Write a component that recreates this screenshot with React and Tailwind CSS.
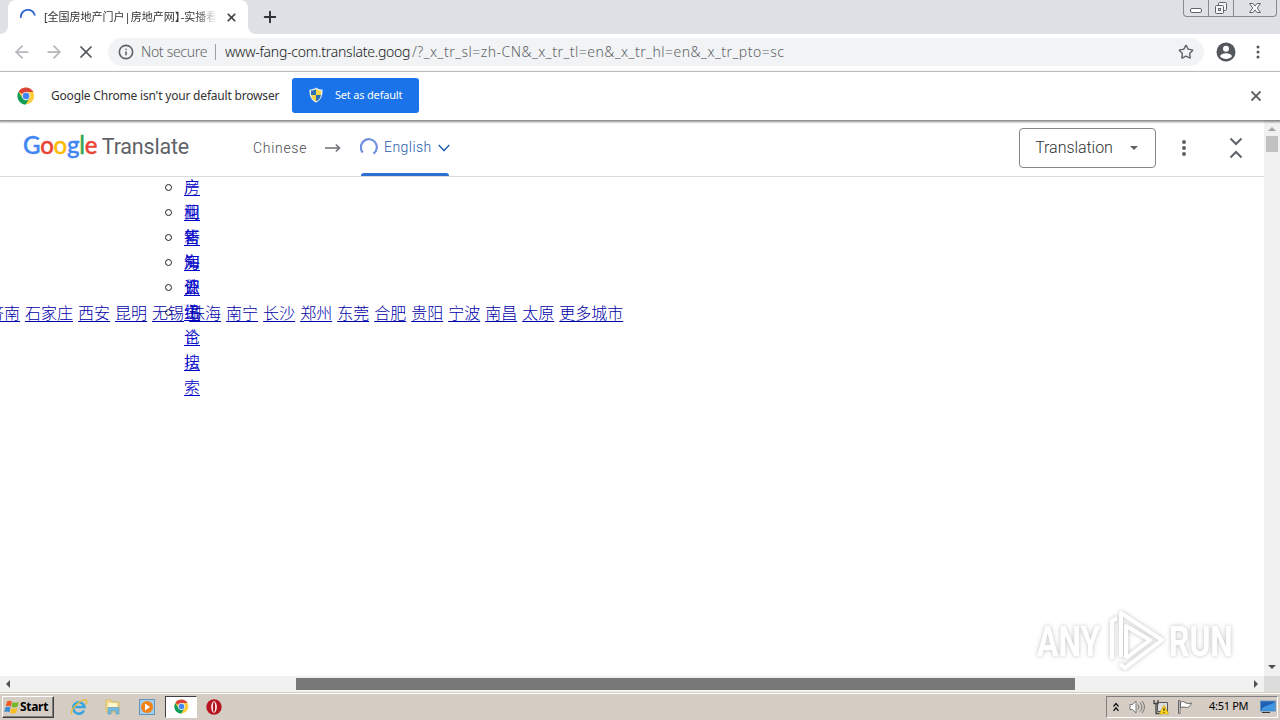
import React from "react";
import { ArrowLeft, ArrowRight, X, Plus, Star, Info } from "lucide-react";

const cities = [
  "济南", "石家庄", "西安", "昆明", "无锡", "珠海", "南宁", "长沙", "郑州",
  "东莞", "合肥", "贵阳", "宁波", "南昌", "太原", "更多城市",
];

const searchTypes = ["新房租售", "产业", "问答知识", "新房资讯", "海外", "业主论坛", "综合搜索"];

const ChromeLogo = ({ className }) => (
  <svg viewBox="0 0 48 48" className={className}>
    <circle cx="24" cy="24" r="22" fill="#ffcd40" />
    <path d="M24 24 4.100 12.500A23 23 0 0 1 43.900 13H24z" fill="#db4437" />
    <path d="M4.100 12.500 14.500 29.500 24 35l9.500-5.500L22.500 47A23 23 0 0 1 4.100 12.500z" fill="#0f9d58" />
    <circle cx="24" cy="24" r="11" fill="#f1f1f1" />
    <circle cx="24" cy="24" r="8.700" fill="#4285f4" />
  </svg>
);

const Shield = () => (
  <svg viewBox="0 0 16 16" className="w-4 h-4">
    <path d="M8 .5C6 2 4 2.5 1.5 2.5 1 9 3.500 13.500 8 15.500 12.500 13.500 15 9 14.500 2.500 12 2.500 10 2 8 .5z" fill="#e8edf2" />
    <path d="M8 2C6.500 3 5 3.500 3 3.600V8H8z" fill="#2d6fb5" />
    <path d="M8 2C9.500 3 11 3.500 13 3.600V8H8z" fill="#f8d648" />
    <path d="M3 8C3.500 11 5 13 8 14.300V8z" fill="#f8d648" />
    <path d="M13 8C12.500 11 11 13 8 14.300V8z" fill="#2d6fb5" />
  </svg>
);

const TabStrip = () => (
  <div className="h-[34px] shrink-0 bg-[#dee1e6] flex items-start justify-between">
    <div className="flex h-full">
      <div className="w-2 h-full bg-white">
        <div className="w-2 h-full bg-[#dee1e6] rounded-br-lg" />
      </div>
      <div className="w-[240px] h-full bg-white rounded-t-lg flex items-center pl-3 pr-2.5">
        <svg viewBox="0 0 16 16" className="w-4 h-4 shrink-0">
          <path d="M.9 8.800A7.100 7.100 0 0 1 14.900 6.500" fill="none" stroke="#3367d6" strokeWidth="1.900" />
        </svg>
        <div className="ml-2 w-[174px] h-5 overflow-hidden whitespace-nowrap text-[11px] leading-5 text-[#333] [mask-image:linear-gradient(to_right,black_87%,transparent)]">
          [全国房地产门户|房地产网<span className="-mr-[5px]">】</span>-实播看房
        </div>
        <X className="w-[13px] h-[13px] ml-2 shrink-0 text-[#3c4043]" strokeWidth={3.200} />
      </div>
      <div className="w-2 h-full bg-white">
        <div className="w-2 h-full bg-[#dee1e6] rounded-bl-lg" />
      </div>
      <Plus className="w-[18px] h-[18px] ml-[5px] mt-2 text-[#303336]" strokeWidth={2.600} />
    </div>
    <div className="flex w-[94px] h-[17px] mr-[3px] border border-t-0 border-[#858991] rounded-b-[4px] text-[#5f646c]">
      <div className="w-[25px] border-r border-[#858991] flex justify-center">
        <div className="mt-2 w-3 h-[5px] border border-[#5f646c] rounded-[2px] bg-white" />
      </div>
      <div className="w-[25px] border-r border-[#858991] flex justify-center">
        <svg viewBox="0 0 14 14" className="w-3.5 h-3.5 mt-px" fill="#f4f5f7" stroke="#5f646c">
          <rect x="4.500" y="1.500" width="8" height="8" rx="1" />
          <rect x="1.500" y="4.500" width="8" height="8" rx="1" />
          <rect x="4.500" y="7.500" width="2" height="2" />
        </svg>
      </div>
      <div className="flex-1 flex justify-center">
        <svg viewBox="0 0 14 12" className="w-3.5 h-3 mt-[2px]" fill="#f7f7f9" stroke="#5f646c">
          <path d="M1.500 1.500h3.500l2 2.500 2-2.500h3.500L9.300 6l3.200 4.500H9L7 8l-2 2.500H1.500L4.700 6z" />
        </svg>
      </div>
    </div>
  </div>
);

const Toolbar = () => (
  <div className="h-[38px] shrink-0 bg-white border-b border-[#dadce0] flex items-center">
    <ArrowLeft className="w-5 h-5 ml-3 -mt-px text-[#b5b7ba]" strokeWidth={2.100} />
    <ArrowRight className="w-5 h-5 ml-3 -mt-px text-[#b5b7ba]" strokeWidth={2.100} />
    <X className="w-5 h-5 ml-3 -mt-px text-[#4f5357]" strokeWidth={2.100} />
    <div className="ml-3 -mt-px w-[1096px] h-7 rounded-full bg-[#f1f3f4] flex items-center pl-2.5 pr-2.5 text-sm whitespace-nowrap">
      <Info className="w-4 h-4 text-[#5f6368] shrink-0" strokeWidth={2.400} />
      <span className="ml-[7px] w-[67px] text-[#5f6368] font-light tracking-[-0.3px]">Not secure</span>
      <span className="ml-[7px] w-px h-4 bg-[#9aa0a6]" />
      <span className="ml-[9px] flex text-[#5f6368] font-light">
        <span className="w-[187px] text-[#202124] tracking-[-0.24px]">www-fang-com.translate.goog</span>
        <span className="tracking-[0.48px]">/?_x_tr_sl=zh-CN&_x_tr_tl=en&_x_tr_hl=en&_x_tr_pto=sc</span>
      </span>
      <Star className="w-4 h-4 ml-auto text-[#5f6368]" strokeWidth={2.100} />
    </div>
    <svg viewBox="0 0 20 20" className="w-5 h-5 ml-3 -mt-px">
      <circle cx="10" cy="10" r="9.500" fill="#54585d" />
      <circle cx="10" cy="6.800" r="3" fill="#fff" />
      <path d="M4 14.300c1.200-4 10.800-4 12 0-3 3.600-9 3.600-12 0z" fill="#fff" />
    </svg>
    <svg viewBox="0 0 4 16" className="w-1 h-4 ml-5 -mt-px" fill="#54585d">
      <circle cx="2" cy="3" r="1.500" />
      <circle cx="2" cy="8" r="1.500" />
      <circle cx="2" cy="13" r="1.500" />
    </svg>
  </div>
);

const DefaultBrowserBar = () => (
  <div className="relative z-20 h-[48px] shrink-0 bg-white flex items-center shadow-[0_1px_2px_1px_rgba(0,0,0,0.45)]">
    <ChromeLogo className="w-[18px] h-[18px] ml-[17px]" />
    <span className="ml-4 w-[229px] text-[12px] text-[#333] tracking-[-0.19px] whitespace-nowrap">
      Google Chrome isn't your default browser
    </span>
    <button className="ml-3 -mt-0.5 w-[127px] h-[35px] bg-[#1a73e8] rounded-[3px] flex items-center pl-4 text-white text-[11px] whitespace-nowrap">
      <Shield />
      <span className="ml-[11px] tracking-[-0.19px]">Set as default</span>
    </button>
    <X className="w-4 h-4 ml-auto mr-4 text-[#5f6368]" strokeWidth={2.700} />
  </div>
);

const TranslateHeader = () => (
  <div className="relative z-10 h-[57px] bg-white border-b border-[#dadce0] flex items-center font-['Roboto',sans-serif] text-[#5f6368]">
    <div className="ml-[23px] w-[166px] flex items-baseline text-[21.5px] leading-7 -mt-1 whitespace-nowrap">
      <span className="w-[79px] text-[24px] font-['Lato',sans-serif] font-medium tracking-[-0.25px] [-webkit-text-stroke:0.4px_currentColor]">
        <span className="text-[#4285f4]">G</span>
        <span className="text-[#ea4335]">o</span>
        <span className="text-[#fbbc04]">o</span>
        <span className="text-[#4285f4]">g</span>
        <span className="text-[#34a853]">l</span>
        <span className="text-[#ea4335]">e</span>
      </span>
      <span className="tracking-[-0.2px]">Translate</span>
    </div>
    <span className="ml-16 w-[54px] text-[14px] font-light text-[#4a4d51] tracking-[0.7px]">Chinese</span>
    <svg viewBox="0 0 16 10" className="w-4 h-2.5 ml-[18px]" fill="none" stroke="#6b6f73" strokeWidth="1.500">
      <path d="M0 5h14.500M10.800 1.500 14.500 5 10.800 8.500" />
    </svg>
    <div className="ml-5 w-[88px] h-full flex flex-col">
      <div className="flex-1 flex items-center text-[#2259ab] text-[14px]">
        <svg viewBox="0 0 18 18" className="w-[18px] h-[18px] shrink-0 -ml-px">
          <path d="M2.800 14.500A8 8 0 1 1 13.500 15.700" fill="none" stroke="#6f8fe0" strokeWidth="2.200" />
        </svg>
        <span className="ml-1.5 w-[47px] mt-px font-light tracking-[0.45px]">English</span>
        <svg viewBox="0 0 12 8" className="w-3 h-2 ml-[7px] mt-0.5 shrink-0" fill="none" stroke="#3068b5" strokeWidth="1.600">
          <path d="M.7 1 6 6.500 11.300 1" />
        </svg>
      </div>
      <div className="h-[3px] bg-[#2b6fd0] rounded-t-[3px]" />
    </div>
    <button className="ml-auto w-[137px] h-10 -mt-px border border-[#80868b] rounded-[4px] flex items-center pl-[15px] pt-px text-[16px] text-[#2f3235] font-light">
      <span className="w-[78px] tracking-[-0.05px]">Translation</span>
      <svg viewBox="0 0 8 4" className="w-2 h-1 ml-[17px]" fill="#5f6368">
        <path d="M0 0h8L4 4z" />
      </svg>
    </button>
    <svg viewBox="0 0 4 16" className="w-1 h-4 ml-[26px] shrink-0" fill="#5f6368">
      <circle cx="2" cy="2" r="2" />
      <circle cx="2" cy="8" r="2" />
      <circle cx="2" cy="14" r="2" />
    </svg>
    <svg viewBox="0 0 14 22" className="w-3.5 h-[22px] ml-[43px] mr-[21px] shrink-0" fill="none" stroke="#5f6368" strokeWidth="2">
      <path d="M1.500 1.500 7 7l5.500-5.500M1.500 20.500 7 15l5.500 5.500" />
    </svg>
  </div>
);

const Watermark = () => (
  <div className="absolute right-[31px] bottom-[3px] h-16 flex items-center text-white font-['Roboto',sans-serif] font-bold text-[43px] [filter:drop-shadow(0_0_2px_rgba(0,0,0,0.25))]">
    <span className="w-[64px]"><span className="inline-block origin-left scale-x-[0.74]">ANY</span></span>
    <svg viewBox="0 0 58 64" className="w-[58px] h-16 ml-1.5 shrink-0" fill="none" stroke="#fff" strokeWidth="4" strokeLinejoin="round">
      <path d="M14 48V4l41 27-37 28-5-4M5 50V12l5-3M19 49V17l24 14-24 18" />
    </svg>
    <span className="ml-1 w-[64px]"><span className="inline-block origin-left scale-x-[0.74]">RUN</span></span>
  </div>
);

const PageContent = () => (
  <div className="relative flex-1 bg-white overflow-hidden">
    <TranslateHeader />
    <ul className="-mt-7 ml-[166px] text-[16px] leading-[25px] text-[#0000c8] font-['Noto_Sans_CJK_SC',sans-serif] font-light">
      {searchTypes.map((name) => (
        <li key={name} className="h-[25px] flex">
          <span className="w-[7px] h-[7px] mt-[10px] -ml-px mr-3 shrink-0 rounded-full border border-[#222]" />
          <a className="block w-4 break-all underline underline-offset-2">{name}</a>
        </li>
      ))}
    </ul>
    {/* City links run across the list */}
    <div className="absolute left-[-12px] top-[180px] flex gap-[5px] whitespace-nowrap text-[16px] leading-[24px] text-[#0000a8] font-['Noto_Sans_CJK_SC',sans-serif] font-light">
      {cities.map((city) => (
        <a key={city} className="underline underline-offset-2">{city}</a>
      ))}
    </div>
    <Watermark />
  </div>
);

const Taskbar = () => (
  <div className="h-[28px] shrink-0 bg-[#d5cdc4] border-t border-[#d5cdc4] shadow-[inset_0_1px_0_#fff] flex items-center">
    <button className="ml-[2px] w-[52px] h-[22px] bg-[#d5cdc4] border border-t-white border-l-white border-r-[#404040] border-b-[#404040] shadow-[inset_-1px_-1px_0_#808080] flex items-center pl-px text-[12px] font-bold tracking-[-0.3px] text-black">
      <svg viewBox="0 0 16 16" className="w-4 h-4 shrink-0">
        <path d="M3 2.500c2-1 3.500-.8 5 .2L6.800 7.500c-1.500-1-3-1-5-.2z" fill="#ec5b24" />
        <path d="M8.700 3c2 1 4 1 6 0l-1.200 4.800c-2 1-4 1-6 0z" fill="#76b82a" />
        <path d="M1.500 8.300c2-1 3.500-.8 5 .2l-1.200 4.800c-1.500-1-3-1-5-.2z" fill="#388bd4" />
        <path d="M7.300 9c2 1 4 1 6 0l-1.200 4.800c-2 1-4 1-6 0z" fill="#f9be23" />
      </svg>
      <span>Start</span>
    </button>
    <svg viewBox="0 0 18 18" className="w-[18px] h-[18px] ml-4">
      <path d="M14 12.500A5.700 5.700 0 1 1 14.500 9H5" fill="none" stroke="#3aa5de" strokeWidth="2.600" />
      <path d="M2 16C-1 13 10 1 16 2c1.500.5.5 3-.5 4.500" fill="none" stroke="#e9bd38" strokeWidth="1.400" />
    </svg>
    <svg viewBox="0 0 18 18" className="w-[18px] h-[18px] ml-4">
      <path d="M2 2h5l1 2h7v10H2z" fill="#f0d98a" stroke="#d4b456" strokeWidth=".7" />
      <path d="M4 5h9v4H4z" fill="#fff7cf" />
      <path d="M4 16V9.500h11V16h-3v-3H7v3z" fill="#74b9dc" stroke="#5d9bbb" strokeWidth=".6" />
    </svg>
    <svg viewBox="0 0 16 16" className="w-4 h-4 ml-[17px]">
      <rect x=".5" y=".5" width="15" height="15" fill="#a8cbe6" stroke="#5e97c4" />
      <circle cx="8" cy="8" r="6" fill="#ef8219" />
      <path d="M6 4.500v7L11 8z" fill="#fff" />
    </svg>
    <div className="ml-2.5 w-8 h-[22px] bg-white border border-t-[#404040] border-l-[#404040] border-r-white border-b-white flex items-center justify-center">
      <ChromeLogo className="w-[15px] h-[15px]" />
    </div>
    <svg viewBox="0 0 16 16" className="w-4 h-4 ml-[9px]">
      <circle cx="8" cy="8" r="7.700" fill="#b61520" />
      <ellipse cx="8" cy="8" rx="2.800" ry="5.800" fill="#fff" />
      <ellipse cx="8" cy="8" rx="1.200" ry="5" fill="#b61520" />
    </svg>
    <div className="ml-auto mr-[2px] w-[172px] h-[22px] border border-t-[#808080] border-l-[#808080] border-r-white border-b-white flex items-center text-black">
      <svg viewBox="0 0 8 10" className="w-2 h-2.5 ml-[5px]" fill="none" stroke="#111" strokeWidth="1.300">
        <path d="m1.500 4.500 2.500-3 2.500 3M1.500 8.800l2.500-3 2.500 3" />
      </svg>
      <svg viewBox="0 0 16 16" className="w-4 h-4 ml-[9px]" fill="none" stroke="#777">
        <path d="M1 5.500h2.500L7 2v12l-3.500-3.500H1z" fill="#fff" />
        <path d="M9 5.500q2 2.500 0 5M11 3.500q4 4.500 0 9M13 2q5 6 0 12" />
      </svg>
      <svg viewBox="0 0 16 16" className="w-4 h-4 ml-2">
        <path d="M4.500 3.500h10v9h-10z" fill="#ddd" stroke="#555" />
        <path d="M1 1v3.500h4V1M3 5v9.500h5" fill="none" stroke="#444" strokeWidth="1.300" />
        <path d="m11 6 4.700 9H6.300z" fill="#ffd51c" stroke="#bd9200" strokeWidth=".5" />
        <path d="M11 9v3m0 1v1" stroke="#222" />
      </svg>
      <svg viewBox="0 0 16 16" className="w-4 h-4 ml-2" fill="#fff" stroke="#666">
        <path d="M3.500 3c3-1 4 0 5.500 1 2 .8 3.500.5 5.500 0-1 2-2 4-4 4.500-2 0-3-1-7 0z" />
        <path d="M1.500 1.500h1.500v13H1.500z" />
      </svg>
      <span className="ml-4 w-[41px] text-[11px] tracking-[-0.3px] whitespace-nowrap">4:51 PM</span>
      <svg viewBox="0 0 16 14" className="w-4 h-3.5 ml-[10px] shrink-0">
        <rect x=".5" y="1" width="15" height="10" fill="#1e61b5" stroke="#6692bd" />
        <path d="M1 10.500C3 5 9 6 15 2v9z" fill="#4196df" />
        <path d="M2 12.500h8" stroke="#333" />
      </svg>
    </div>
  </div>
);

export default function App() {
  return (
    <div className="w-[1280px] h-[720px] flex flex-col overflow-hidden bg-white font-['Noto_Sans','Noto_Sans_CJK_SC',sans-serif]">
      <TabStrip />
      <Toolbar />
      <DefaultBrowserBar />
      <div className="flex-1 min-h-0 flex">
        <PageContent />
        {/* Vertical scrollbar */}
        <div className="w-4 bg-[#f1f1f1] flex flex-col items-center">
          <svg viewBox="0 0 8 4" className="w-2 h-1 mt-[7px]" fill="#a3a3a3"><path d="M0 4h8L4 0z" /></svg>
          <div className="mt-[5px] w-3 h-4 bg-[#c1c1c1]" />
          <svg viewBox="0 0 8 4" className="w-2 h-1 mt-auto mb-[7px]" fill="#505050"><path d="M0 0h8L4 4z" /></svg>
        </div>
      </div>
      {/* Horizontal scrollbar */}
      <div className="h-4 shrink-0 flex">
        <div className="flex-1 bg-[#f1f1f1] flex items-center">
          <svg viewBox="0 0 4 8" className="w-1 h-2 ml-1.5" fill="#505050"><path d="M4 0v8L0 4z" /></svg>
          <div className="ml-[286px] w-[779px] h-3 bg-[#787878]" />
          <svg viewBox="0 0 4 8" className="w-1 h-2 ml-auto mr-[6px]" fill="#505050"><path d="M0 0v8l4-4z" /></svg>
        </div>
        <div className="w-4 bg-[#dcdcdc]" />
      </div>
      <Taskbar />
    </div>
  );
}
